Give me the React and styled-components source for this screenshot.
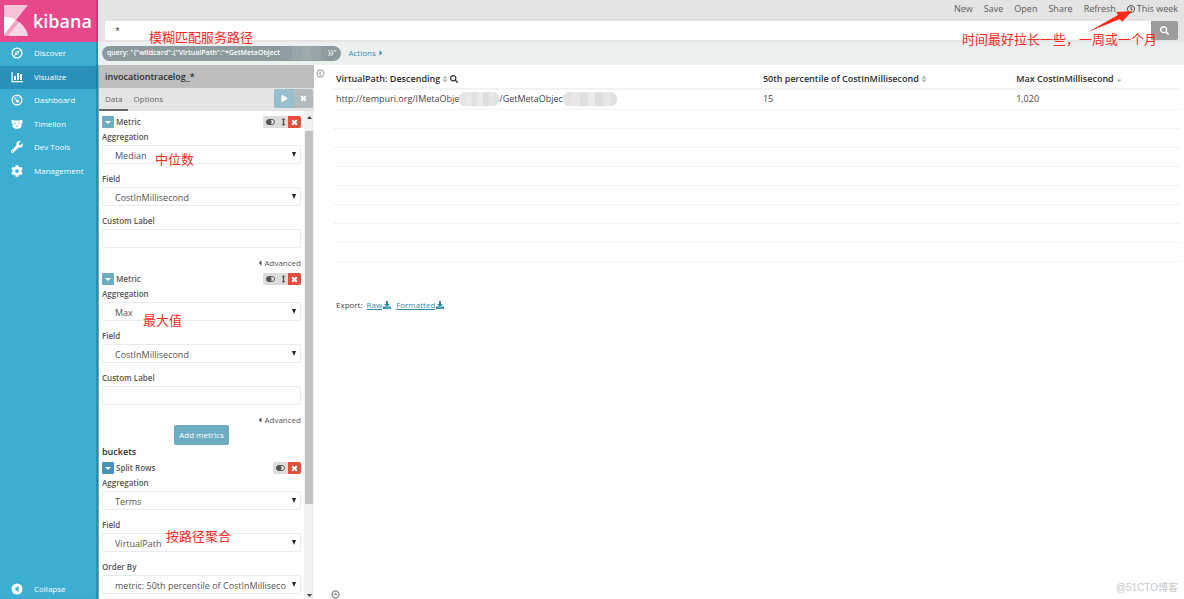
import React from "react";
import styled, { createGlobalStyle, css } from "styled-components";
import {
  FaCaretLeft,
  FaCaretRight,
  FaCog,
  FaDownload,
  FaPlay,
  FaRegClock,
  FaSearch,
  FaSort,
  FaSortDown,
  FaWrench,
} from "react-icons/fa";

const GlobalStyle = createGlobalStyle`
  * {
    box-sizing: border-box;
  }
  body {
    margin: 0;
    background: #fff;
    color: #444;
    font-family: "Open Sans", "Noto Sans CJK SC", sans-serif;
    font-size: 9px;
    line-height: 12px;
  }
  button, input, select {
    font: inherit;
    color: inherit;
    margin: 0;
    padding: 0;
    border: 0;
  }
  a {
    color: inherit;
    text-decoration: none;
  }
  svg {
    display: block;
    flex: none;
  }
`;

const Page = styled.div`
  position: relative;
  display: flex;
  height: 100vh;
  overflow: hidden;
`;

/* ---------- global navigation ---------- */

const Sidebar = styled.nav`
  position: relative;
  z-index: 2;
  flex: none;
  width: 98px;
  display: flex;
  flex-direction: column;
  background: #3caed2;
  color: #fff;
  font-size: 8px;
  box-shadow: inset -2px 0 1px rgba(0, 0, 0, 0.2);
`;

const Brand = styled.a`
  display: flex;
  align-items: center;
  gap: 5px;
  height: 42px;
  padding: 0 0 1px 4px;
  background: #e8488b;
  font-size: 18px;
  font-weight: 600;
  line-height: 24px;
  box-shadow: inset -2px 0 1px rgba(0, 0, 0, 0.15);
`;

const NavList = styled.div`
  display: grid;
  grid-auto-rows: 1fr;
  height: 141px;
`;

const NavLink = styled.a`
  display: flex;
  align-items: center;
  gap: 11px;
  padding: 0 0 1px 11px;
  ${(p) =>
    p.$active &&
    css`
      background: rgba(20, 110, 165, 0.45);
    `}
`;

const NavFoot = styled.div`
  margin-top: auto;
  height: 20px;
  display: grid;
`;

/* ---------- top bar ---------- */

const Main = styled.main`
  flex: 1;
  min-width: 0;
  display: flex;
  flex-direction: column;
`;

const TopBar = styled.header`
  flex: none;
  background: #e4e4e4;
`;

const Menu = styled.div`
  display: flex;
  justify-content: flex-end;
  align-items: center;
  gap: 11px;
  height: 21px;
  padding: 0 6px 4px 0;
  color: #5a5a5a;
`;

const MenuLink = styled.a`
  display: flex;
  align-items: center;
  gap: 2px;
`;

const SearchForm = styled.form`
  display: flex;
  height: 21px;
  padding: 0 6px 2px 7px;
`;

const SearchInput = styled.input`
  flex: 1;
  min-width: 0;
  padding: 0 10px;
  background: #fff;
  border-radius: 2px 0 0 2px;
`;

const SearchButton = styled.button`
  width: 27px;
  display: flex;
  align-items: center;
  justify-content: center;
  background: #9c9c9c;
  color: #fff;
  border-radius: 0 2px 2px 0;
`;

const FilterBar = styled.div`
  flex: none;
  display: flex;
  align-items: center;
  gap: 7px;
  height: 23px;
  padding: 0 4px 1px;
  background: #ecf0f1;
  color: #328caa;
  font-size: 8px;
`;

const FilterPill = styled.span`
  display: flex;
  align-items: center;
  height: 15px;
  padding: 0 5px;
  border-radius: 8px;
  background: #8b9a9c;
  color: #fff;
  font-size: 7px;
  font-weight: 600;
`;

const Actions = styled.a`
  display: flex;
  align-items: center;
  gap: 1px;
`;

const Redacted = styled.span`
  flex: none;
  width: ${(p) => p.$width}px;
  height: 14px;
  border-radius: 6px;
  background: ${(p) =>
    p.$dark
      ? "linear-gradient(90deg, #909fa1 25%, #97a6a8 25% 45%, #9eabad 45% 65%, #96a5a7 65% 85%, #8f9ea0 85%)"
      : "linear-gradient(90deg, #e3e3e3 15%, #e8e8e8 15% 32%, #e0e0e1 32% 46%, #ebebeb 46% 60%, #dedede 60% 74%, #e7e7e7 74% 88%, #e0e1e1 88%)"};
`;

/* ---------- editor ---------- */

const Workspace = styled.div`
  flex: 1;
  min-height: 0;
  display: flex;
`;

const Editor = styled.section`
  flex: none;
  width: 216px;
  display: flex;
  flex-direction: column;
  border-left: 1px solid #6eadc1;
`;

const IndexTitle = styled.h1`
  flex: none;
  margin: 0;
  padding: 0 6px;
  height: 23px;
  background: #bdbdbd;
  color: #2d2d2d;
  font-size: 9px;
  font-weight: 600;
  line-height: 23px;
`;

const Tabs = styled.div`
  flex: none;
  display: flex;
  height: 23px;
  background: #e4e4e4;
  color: #666;
  font-size: 8px;
`;

const Tab = styled.button`
  padding: 0 5px 0 6px;
  background: none;
  border-bottom: 2px solid ${(p) => (p.$active ? "#666" : "transparent")};
`;

const RunButtons = styled.div`
  display: flex;
  margin: 1px 1px 3px auto;
  border-radius: 2px;
  overflow: hidden;
`;

const RunButton = styled.button`
  display: flex;
  align-items: center;
  justify-content: center;
  width: ${(p) => (p.$primary ? 20 : 19)}px;
  background: ${(p) => (p.$primary ? "#96c0ce" : "#b1bcbe")};
  color: #fff;
`;

const EditorBody = styled.div`
  flex: 1;
  min-height: 0;
  display: flex;
`;

const Aggs = styled.div`
  flex: 1;
  min-width: 0;
  overflow: hidden;
  padding: 5px 3px 0;
  color: #555;
  font-size: 8px;
`;

const Agg = styled.section`
  margin-bottom: 5px;
`;

const AggHeader = styled.div`
  display: flex;
  align-items: center;
  height: 12px;
  margin-bottom: 3px;
  font-weight: 600;
`;

const AggToggle = styled.button`
  display: flex;
  align-items: center;
  justify-content: center;
  width: 12px;
  height: 12px;
  margin-right: 2px;
  border-radius: 1px;
  background: ${(p) => (p.$focused ? "#4792b2" : "#6eadc1")};
  color: #fff;
`;

const AggControls = styled.div`
  display: flex;
  height: 12px;
  margin-left: auto;
  border-radius: 2px;
  overflow: hidden;
`;

const ControlButton = styled.button`
  display: flex;
  align-items: center;
  justify-content: center;
  width: ${(p) => (p.$narrow ? 10 : 15)}px;
  background: #dcdcdc;
  color: #555;
  ${(p) =>
    p.$danger &&
    css`
      width: 13px;
      background: #e74c3c;
      color: #fff;
    `}
`;

const Field = styled.label`
  display: block;
  margin-bottom: 9px;
  font-weight: 600;
`;

const Control = styled.span`
  position: relative;
  display: block;
  margin-top: 2px;

  svg {
    position: absolute;
    top: 7px;
    right: 5px;
    pointer-events: none;
  }
`;

const controlBox = css`
  display: block;
  width: 100%;
  height: 19px;
  border: 1px solid #e6ecec;
  border-radius: 2px;
  background: #fff;
  font-size: 9px;
  font-weight: 400;
`;

const Select = styled.select`
  ${controlBox}
  appearance: none;
  padding: 2px 8px 0 12px;
`;

const TextInput = styled.input`
  ${controlBox}
  padding: 0 12px;
`;

const Advanced = styled.button`
  display: flex;
  align-items: center;
  height: 11px;
  margin-left: auto;
  background: none;
`;

const AddMetrics = styled.button`
  display: block;
  height: 20px;
  margin: -5px auto 0;
  padding: 0 5px;
  border-radius: 2px;
  background: #6eadc1;
  color: #fff;
`;

const GroupTitle = styled.h2`
  margin: 1px 0 4px;
  color: #2d2d2d;
  font-size: 9px;
  font-weight: 600;
  line-height: 12px;
`;

const ScrollBar = styled.div`
  flex: none;
  width: 10px;
  display: flex;
  flex-direction: column;
  align-items: center;
  padding: 5px 0 2px;
  background: #f1f1f1;
`;

const ScrollTrack = styled.div`
  flex: 1;
  align-self: stretch;
  margin: 12px 1px 3px;
`;

const ScrollThumb = styled.div`
  height: 81%;
  background: #c1c1c1;
`;

/* ---------- result table ---------- */

const Visualization = styled.section`
  flex: 1;
  min-width: 0;
  display: flex;
  padding: 4px 4px 0 2px;
`;

const Rail = styled.div`
  flex: none;
  width: 17px;
  color: #b5b5b5;
`;

const RailButton = styled.button`
  display: block;
  background: none;
`;

const Result = styled.div`
  flex: 1;
  min-width: 0;
  display: flex;
  flex-direction: column;
`;

const Table = styled.table`
  width: 100%;
  table-layout: fixed;
  border-collapse: collapse;
`;

const Th = styled.th`
  width: ${(p) => p.$width};
  height: 20px;
  padding: 0 3px;
  border-bottom: 2px solid #f0f4f4;
  color: #2d2d2d;
  font-weight: 600;
  text-align: left;

  span {
    display: flex;
    align-items: center;
    gap: 1px;
  }
  svg {
    color: #b0b8ba;
  }
  svg + svg {
    color: #2d2d2d;
  }
`;

const Td = styled.td`
  height: ${(p) => (p.$empty ? 19 : 20)}px;
  padding: 0 3px;
  border-bottom: 1px solid #f0f4f4;
  white-space: nowrap;
`;

const Cell = styled.span`
  display: flex;
  align-items: center;
`;

const Export = styled.div`
  display: flex;
  align-items: center;
  gap: 4px;
  margin-top: 37px;
  padding-left: 3px;
  font-size: 8px;
`;

const ExportLink = styled.a`
  display: flex;
  align-items: center;
  gap: 1px;
  margin-right: 1px;
  color: #328caa;
  text-decoration: underline;
`;

const SpyButton = styled(RailButton)`
  margin-top: auto;
  margin-left: -2px;
  color: #999;
`;

/* ---------- notes drawn over the page ---------- */

const Note = styled.span`
  position: absolute;
  z-index: 3;
  top: ${(p) => p.$top}px;
  left: ${(p) => (p.$left ? `${p.$left}px` : "auto")};
  right: ${(p) => (p.$right ? `${p.$right}px` : "auto")};
  color: #fc2a1c;
  font-family: "Noto Sans CJK SC", sans-serif;
  font-size: 13px;
  line-height: 18px;
  white-space: nowrap;
  pointer-events: none;
`;

const Arrow = styled.svg`
  position: absolute;
  z-index: 3;
  top: 10px;
  right: 50px;
  pointer-events: none;
`;

const Watermark = styled.span`
  position: absolute;
  right: 6px;
  bottom: 5px;
  color: #c8c8c8;
  font-family: "Liberation Sans", "Noto Sans CJK SC", sans-serif;
  font-size: 10px;
`;

/* ---------- icons ---------- */

const KibanaLogo = () => (
  <svg width="24" height="32" viewBox="0 0 24 32">
    <path d="M0 0h24L0 30z" fill="#f9c3da" />
    <path d="M0 12c5 0 9 1 12 3L0 30z" fill="#fff" />
    <path d="M12 15c7 4 11 10 12 16H0v-1z" fill="#f4a3c5" />
    <path d="M15 17c5 4 8 9 9 14H4z" fill="#fbd5e5" />
  </svg>
);

const NavIcon = ({ children }) => (
  <svg width="12" height="12" viewBox="0 0 12 12" fill="none" stroke="#fff">
    {children}
  </svg>
);

const CompassIcon = () => (
  <NavIcon>
    <circle cx="6" cy="6" r="4.9" strokeWidth="1.3" />
    <path d="M8.8 3.2 7.2 7.2 3.2 8.8 4.8 4.8z" fill="#fff" stroke="none" />
    <circle cx="6" cy="6" r="0.8" fill="#3caed2" stroke="none" />
  </NavIcon>
);

const ChartIcon = () => (
  <NavIcon>
    <path d="M1.1 1v9.6H12" strokeWidth="1.2" />
    <path d="M3 5h2v4H3zM6 2h2v7H6zM9 3h2v6H9z" fill="#fff" stroke="none" />
  </NavIcon>
);

const GaugeIcon = () => (
  <NavIcon>
    <circle cx="6" cy="6" r="4.9" strokeWidth="1.3" />
    <path d="M3.6 3.8 6.4 7" strokeWidth="1.1" />
    <circle cx="6.3" cy="7.2" r="1.4" fill="#fff" stroke="none" />
    <path d="M5.6 3h1M8 4.2l.6.6M8.8 6.4v.8M3 6.4v.8" strokeWidth="0.9" />
  </NavIcon>
);

const BearIcon = () => (
  <NavIcon>
    <path
      d="M.5 2.400c1-.6 2-.5 2.800 0h5.400c.8-.5 1.800-.6 2.800 0v2.400l-1 1V8.500c-.8 1.500-2.400 2.300-4.500 2.300S2.300 10 1.500 8.500V5.800l-1-1z"
      fill="#fff"
      stroke="none"
    />
    <path d="M3.400 5.400h1.200M7.400 5.400h1.200M5.200 8.200h1.600" stroke="#3caed2" />
  </NavIcon>
);

const CollapseIcon = () => (
  <NavIcon>
    <circle cx="6" cy="6" r="5.5" fill="#fff" stroke="none" />
    <path d="M7.6 3v6L3.6 6z" fill="#3caed2" stroke="none" />
  </NavIcon>
);

const CrossIcon = () => (
  <svg width="7" height="7" viewBox="0 0 7 7" stroke="currentColor" strokeWidth="2">
    <path d="M1.2 1.2l4.600 4.600M5.800 1.200 1.200 5.800" />
  </svg>
);

const CaretIcon = () => (
  <svg width="6" height="3" viewBox="0 0 6 3" fill="currentColor">
    <path d="M0 0h6L3 3z" />
  </svg>
);

const ToggleIcon = () => (
  <svg width="9" height="6" viewBox="0 0 9 6">
    <rect x="0.5" y="0.5" width="8" height="5" rx="2.5" fill="#eee" stroke="#555" />
    <circle cx="3" cy="3" r="2.6" fill="#555" />
  </svg>
);

const MoveIcon = () => (
  <svg width="5" height="8" viewBox="0 0 5 8" fill="#555">
    <path d="M2.5 0 4.400 2H3.200v4h1.200L2.500 8 .6 6h1.200V2H.6z" />
  </svg>
);

const DownArrow = () => (
  <svg width="4" height="5" viewBox="0 0 4 5">
    <path d="M0 0h4L2 5z" fill="#222" />
  </svg>
);

const ScrollArrow = ({ up }) => (
  <svg width="5" height="3" viewBox="0 0 5 3">
    <path d={up ? "M0 3h5L2.5 0z" : "M0 0h5L2.5 3z"} fill="#444" />
  </svg>
);

const ChevronCircle = ({ up }) => (
  <svg width="9" height="9" viewBox="0 0 9 9" fill="none" stroke="currentColor">
    <circle cx="4.5" cy="4.5" r="3.4" strokeWidth="1.5" />
    <path
      d={up ? "M2.8 5.2 4.5 3.500l1.700 1.700" : "M5.200 2.800 3.500 4.500l1.700 1.700"}
      strokeWidth="1.3"
    />
  </svg>
);

const navItems = [
  { label: "Discover", icon: <CompassIcon /> },
  { label: "Visualize", icon: <ChartIcon />, active: true },
  { label: "Dashboard", icon: <GaugeIcon /> },
  { label: "Timelion", icon: <BearIcon /> },
  { label: "Dev Tools", icon: <FaWrench size={12} /> },
  { label: "Management", icon: <FaCog size={12} /> },
];

const SelectField = ({ label, value }) => (
  <Field>
    {label}
    <Control>
      <Select defaultValue={value}>
        <option>{value}</option>
      </Select>
      <DownArrow />
    </Control>
  </Field>
);

const AggTitle = ({ title, movable, focused }) => (
  <AggHeader>
    <AggToggle type="button" $focused={focused} aria-label="Toggle editor">
      <CaretIcon />
    </AggToggle>
    {title}
    <AggControls>
      <ControlButton type="button" aria-label="Disable">
        <ToggleIcon />
      </ControlButton>
      {movable && (
        <ControlButton type="button" $narrow aria-label="Change priority">
          <MoveIcon />
        </ControlButton>
      )}
      <ControlButton type="button" $danger aria-label="Remove">
        <CrossIcon />
      </ControlButton>
    </AggControls>
  </AggHeader>
);

const Metric = ({ aggregation, field }) => (
  <Agg>
    <AggTitle title="Metric" movable />
    <SelectField label="Aggregation" value={aggregation} />
    <SelectField label="Field" value={field} />
    <Field>
      Custom Label
      <Control>
        <TextInput type="text" />
      </Control>
    </Field>
    <Advanced type="button">
      <FaCaretLeft size={8} />
      Advanced
    </Advanced>
  </Agg>
);

const App = () => {
  return (
    <>
      <GlobalStyle />
      <Page>
        <Sidebar>
          <Brand href="#">
            <KibanaLogo />
            kibana
          </Brand>
          <NavList>
            {navItems.map((item) => (
              <NavLink key={item.label} href="#" $active={item.active}>
                {item.icon}
                {item.label}
              </NavLink>
            ))}
          </NavList>
          <NavFoot>
            <NavLink href="#">
              <CollapseIcon />
              Collapse
            </NavLink>
          </NavFoot>
        </Sidebar>

        <Main>
          <TopBar>
            <Menu>
              <MenuLink href="#">New</MenuLink>
              <MenuLink href="#">Save</MenuLink>
              <MenuLink href="#">Open</MenuLink>
              <MenuLink href="#">Share</MenuLink>
              <MenuLink href="#">Refresh</MenuLink>
              <MenuLink href="#">
                <FaRegClock size={8} color="#333" />
                This week
              </MenuLink>
            </Menu>
            <SearchForm>
              <SearchInput type="text" aria-label="Search" defaultValue="*" />
              <SearchButton type="button" aria-label="Search">
                <FaSearch size={9} />
              </SearchButton>
            </SearchForm>
          </TopBar>
          <FilterBar>
            <FilterPill>
              {'query: "{"wildcard":{"VirtualPath":"*GetMetaObject'}
              <Redacted $width={48} $dark />
              {'}}"'}
            </FilterPill>
            <Actions href="#">
              Actions
              <FaCaretRight size={8} />
            </Actions>
          </FilterBar>

          <Workspace>
            <Editor>
              <IndexTitle>invocationtracelog_*</IndexTitle>
              <Tabs>
                <Tab type="button" $active>
                  Data
                </Tab>
                <Tab type="button">Options</Tab>
                <RunButtons>
                  <RunButton type="button" $primary aria-label="Apply changes">
                    <FaPlay size={7} />
                  </RunButton>
                  <RunButton type="button" aria-label="Discard changes">
                    <CrossIcon />
                  </RunButton>
                </RunButtons>
              </Tabs>
              <EditorBody>
                <Aggs>
                  <Metric aggregation="Median" field="CostInMillisecond" />
                  <Metric aggregation="Max" field="CostInMillisecond" />
                  <AddMetrics type="button">Add metrics</AddMetrics>
                  <GroupTitle>buckets</GroupTitle>
                  <Agg>
                    <AggTitle title="Split Rows" focused />
                    <SelectField label="Aggregation" value="Terms" />
                    <SelectField label="Field" value="VirtualPath" />
                    <SelectField
                      label="Order By"
                      value="metric: 50th percentile of CostInMilliseco"
                    />
                  </Agg>
                </Aggs>
                <ScrollBar>
                  <ScrollArrow up />
                  <ScrollTrack>
                    <ScrollThumb />
                  </ScrollTrack>
                  <ScrollArrow />
                </ScrollBar>
              </EditorBody>
            </Editor>

            <Visualization>
              <Rail>
                <RailButton type="button" aria-label="Hide editor">
                  <ChevronCircle />
                </RailButton>
              </Rail>
              <Result>
                <Table>
                  <thead>
                    <tr>
                      <Th $width="50.4%">
                        <span>
                          VirtualPath: Descending
                          <FaSort size={8} />
                          <FaSearch size={8} />
                        </span>
                      </Th>
                      <Th $width="29.9%">
                        <span>
                          50th percentile of CostInMillisecond
                          <FaSort size={8} />
                        </span>
                      </Th>
                      <Th>
                        <span>
                          Max CostInMillisecond
                          <FaSortDown size={8} />
                        </span>
                      </Th>
                    </tr>
                  </thead>
                  <tbody>
                    <tr>
                      <Td>
                        <Cell>
                          http://tempuri.org/IMetaObje
                          <Redacted $width={40} />
                          /GetMetaObjec
                          <Redacted $width={54} />
                        </Cell>
                      </Td>
                      <Td>15</Td>
                      <Td>1,020</Td>
                    </tr>
                    {[...Array(8)].map((_, i) => (
                      <tr key={i}>
                        <Td $empty colSpan={3} />
                      </tr>
                    ))}
                  </tbody>
                </Table>
                <Export>
                  Export:
                  <ExportLink href="#">
                    Raw <FaDownload size={8} />
                  </ExportLink>
                  <ExportLink href="#">
                    Formatted <FaDownload size={8} />
                  </ExportLink>
                </Export>
                <SpyButton type="button" aria-label="Show request">
                  <ChevronCircle up />
                </SpyButton>
              </Result>
            </Visualization>
          </Workspace>
        </Main>

        <Note $top={28} $left={149}>模糊匹配服务路径</Note>
        <Note $top={150} $left={155}>中位数</Note>
        <Note $top={311} $left={143}>最大值</Note>
        <Note $top={527} $left={166}>按路径聚合</Note>
        <Note $top={30} $right={27}>时间最好拉长一些，一周或一个月</Note>
        <Arrow width="46" height="24" viewBox="0 0 46 24">
          <path d="M0 22 30 5l-2-3L44 1 34 12l-2-3z" fill="#fc2a1c" />
        </Arrow>
        <Watermark>@51CTO博客</Watermark>
      </Page>
    </>
  );
};

export default App;
